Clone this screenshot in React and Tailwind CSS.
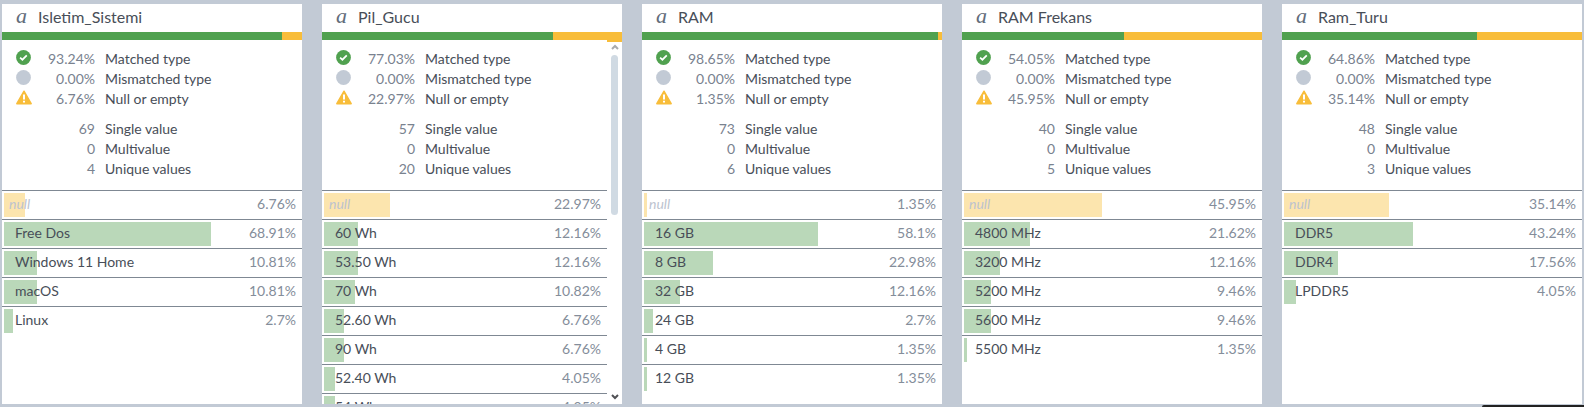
const columns = [
  {
    name: 'Isletim_Sistemi', matched: 93.24, empty: 6.76, single: 69, unique: 4,
    rows: [[null, 6.76], ['Free Dos', 68.91], ['Windows 11 Home', 10.81], ['macOS', 10.81], ['Linux', 2.7]],
  },
  {
    name: 'Pil_Gucu', matched: 77.03, empty: 22.97, single: 57, unique: 20, scrolls: true,
    rows: [[null, 22.97], ['60 Wh', 12.16], ['53.50 Wh', 12.16], ['70 Wh', 10.82], ['52.60 Wh', 6.76], ['90 Wh', 6.76], ['52.40 Wh', 4.05], ['54 Wh', 4.05]],
  },
  {
    name: 'RAM', matched: 98.65, empty: 1.35, single: 73, unique: 6,
    rows: [[null, 1.35], ['16 GB', 58.1], ['8 GB', 22.98], ['32 GB', 12.16], ['24 GB', 2.7], ['4 GB', 1.35], ['12 GB', 1.35]],
  },
  {
    name: 'RAM Frekans', matched: 54.05, empty: 45.95, single: 40, unique: 5,
    rows: [[null, 45.95], ['4800 MHz', 21.62], ['3200 MHz', 12.16], ['5200 MHz', 9.46], ['5600 MHz', 9.46], ['5500 MHz', 1.35]],
  },
  {
    name: 'Ram_Turu', matched: 64.86, empty: 35.14, single: 48, unique: 3,
    rows: [[null, 35.14], ['DDR5', 43.24], ['DDR4', 17.56], ['LPDDR5', 4.05]],
  },
];

function MatchedIcon() {
  return (
    <svg viewBox="0 0 15 15" className="size-[15px]" aria-hidden="true">
      <circle cx="7.5" cy="7.5" r="7.4" fill="#50a14f" />
      <path d="M4.1 7.6 L6.4 9.7 L10.8 5.3" fill="none" stroke="#fff" strokeWidth="1.7" />
    </svg>
  );
}

function MismatchedIcon() {
  return (
    <svg viewBox="0 0 15 15" className="size-[15px]" aria-hidden="true">
      <circle cx="7.5" cy="7.5" r="7.4" fill="#c2cad5" />
    </svg>
  );
}

function EmptyIcon() {
  return (
    <svg viewBox="0 0 16 15" className="h-[15px] w-4" aria-hidden="true">
      <path d="M8 1.2 L15.2 13.7 H0.8 Z" fill="#f8bd3a" stroke="#f8bd3a" strokeWidth="1.4" strokeLinejoin="round" />
      <path d="M8 4.6 V9.4 M8 10.7 V12.6" stroke="#fff" strokeWidth="2" />
    </svg>
  );
}

function Stat({ icon, value, label }) {
  return (
    <div className="flex h-5 items-center">
      <dt className="order-last pl-[10px] text-[#484e58]">{label}</dt>
      <dd className="flex w-[79px] items-center justify-between text-[#79828f]">
        <span className="-mt-1">{icon}</span>
        {value}
      </dd>
    </div>
  );
}

function ValueRow({ label, percent }) {
  const empty = label === null;
  return (
    <tr className="relative flex h-[29px] items-center justify-between border-t border-[#7f8893] pr-[6px]">
      <th scope="row" className={empty ? 'pb-[2px] pl-[7px] font-normal italic text-[#bcc3cf]' : 'pb-[2px] pl-[13px] font-normal text-[#484e58]'}>
        <span
          className={empty ? 'absolute top-[2px] bottom-[2px] left-[2px] bg-[#fce5ae]' : 'absolute top-[2px] bottom-[2px] left-[2px] bg-[#bad8b9]'}
          style={{ width: `${Math.round(percent)}%` }}
        />
        <span className="relative">{empty ? 'null' : label}</span>
      </th>
      <td className="pb-[2px] text-[#848d9a]">{percent}%</td>
    </tr>
  );
}

function ScrollTrack() {
  return (
    <div className="flex w-[15px] shrink-0 flex-col items-center border-t-2 border-[#f8bd3a] bg-white pb-1" aria-hidden="true">
      <svg viewBox="0 0 8 6" className="mt-[2px] h-[6px] w-2">
        <path d="M1 5 L4 2 L7 5" fill="none" stroke="#a9abae" strokeWidth="2" />
      </svg>
      <div className="mt-[5px] h-40 w-[7px] rounded-full bg-[#d0dae3]" />
      <svg viewBox="0 0 8 6" className="mt-auto h-[6px] w-2">
        <path d="M1 1 L4 4 L7 1" fill="none" stroke="#505155" strokeWidth="2" />
      </svg>
    </div>
  );
}

function ColumnCard({ column }) {
  return (
    <section className="flex min-h-0 min-w-0 flex-col overflow-hidden bg-white">
      <header className="flex h-7 shrink-0 items-center pb-[2px] pl-[14px]">
        <span className="w-[22px] pb-[2px] font-['Liberation_Serif',serif] text-[22px] leading-6 italic text-[#626c7a]">a</span>
        <h2 className="text-base leading-6 text-[#484e58]">{column.name}</h2>
      </header>
      <div className="h-2 shrink-0 bg-[#f8bd3a]">
        <div className="h-full bg-[#50a14f]" style={{ width: `${column.matched}%` }} />
      </div>
      <div className="flex min-h-0 flex-1">
        <div className="min-w-0 flex-1 overflow-hidden">
          <dl className="px-[14px] pt-[9px] pb-[11px]">
            <Stat icon={<MatchedIcon />} value={`${column.matched.toFixed(2)}%`} label="Matched type" />
            <Stat icon={<MismatchedIcon />} value="0.00%" label="Mismatched type" />
            <Stat icon={<EmptyIcon />} value={`${column.empty.toFixed(2)}%`} label="Null or empty" />
            <div className="h-[10px]" />
            <Stat value={column.single} label="Single value" />
            <Stat value="0" label="Multivalue" />
            <Stat value={column.unique} label="Unique values" />
          </dl>
          <table className="block w-full" aria-label={column.name}>
            <tbody className="block">
              {column.rows.map(([label, percent]) => (
                <ValueRow key={label} label={label} percent={percent} />
              ))}
            </tbody>
          </table>
        </div>
        {column.scrolls && <ScrollTrack />}
      </div>
    </section>
  );
}

export default function App() {
  return (
    <main className="relative grid h-screen grid-cols-5 grid-rows-1 gap-5 overflow-hidden bg-[#c2cad5] px-[2px] pt-1 pb-[3px] font-['Lato',sans-serif] text-sm">
      {columns.map((column) => (
        <ColumnCard key={column.name} column={column} />
      ))}
      <div className="absolute right-0 bottom-0 h-[2px] w-[102px] rounded-tl-sm bg-[#222]" />
    </main>
  );
}
